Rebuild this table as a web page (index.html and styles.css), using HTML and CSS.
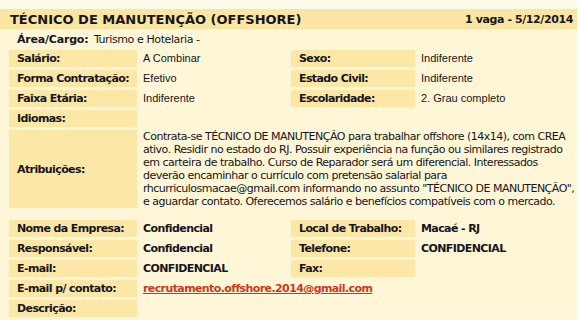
FILE: index.html
```html
<!DOCTYPE html>
<html lang="pt">
<head>
<meta charset="utf-8">
<link rel="stylesheet" href="styles.css">
</head>
<body>
<div class="job">
  <div class="head">
    <span class="title">TÉCNICO DE MANUTENÇÃO (OFFSHORE)</span>
    <span class="date">1 vaga - 5/12/2014</span>
  </div>
  <div class="area"><b>Área/Cargo:</b> <span class="area-val">Turismo e Hotelaria -</span></div>
  <div class="grid">
    <div class="lab">Salário:</div><div class="val">A Combinar</div>
    <div class="lab">Sexo:</div><div class="val">Indiferente</div>
    <div class="lab">Forma Contratação:</div><div class="val">Efetivo</div>
    <div class="lab">Estado Civil:</div><div class="val">Indiferente</div>
    <div class="lab">Faixa Etária:</div><div class="val">Indiferente</div>
    <div class="lab">Escolaridade:</div><div class="val">2. Grau completo</div>
    <div class="lab">Idiomas:</div><div class="val wide"></div>
    <div class="lab mid">Atribuições:</div>
    <div class="val wide desc">Contrata-se TÉCNICO DE MANUTENÇÃO para trabalhar offshore (14x14), com CREA<br>ativo. Residir no estado do RJ. Possuir experiência na função ou similares registrado<br>em carteira de trabalho. Curso de Reparador será um diferencial. Interessados<br>deverão encaminhar o currículo com pretensão salarial para<br>rhcurriculosmacae@gmail.com informando no assunto "TÉCNICO DE MANUTENÇÃO",<br>e aguardar contato. Oferecemos salário e benefícios compatíveis com o mercado.</div>
  </div>
  <div class="grid lower">
    <div class="lab">Nome da Empresa:</div><div class="val bold">Confidencial</div>
    <div class="lab">Local de Trabalho:</div><div class="val bold">Macaé - RJ</div>
    <div class="lab">Responsável:</div><div class="val bold">Confidencial</div>
    <div class="lab">Telefone:</div><div class="val bold">CONFIDENCIAL</div>
    <div class="lab">E-mail:</div><div class="val bold">CONFIDENCIAL</div>
    <div class="lab">Fax:</div><div class="val bold"></div>
    <div class="lab">E-mail p/ contato:</div><div class="val bold wide"><a href="#" class="mail">recrutamento.offshore.2014@gmail.com</a></div>
    <div class="lab">Descrição:</div><div class="val wide"></div>
  </div>
</div>
</body>
</html>
```
FILE: styles.css
```css
html, body {
  margin: 0;
  padding: 0;
  background: #ffffff;
}
.job {
  width: 577px;
  background: linear-gradient(#fffbea 0, #fffbea 9px, #fef6d6 9px);
  padding-top: 9px;
  padding-bottom: 3px;
  font-family: "DejaVu Sans", Verdana, sans-serif;
  font-size: 11px;
  color: #151520;
}
.head {
  height: 20px;
  background: #fbe5a2;
  display: flex;
  align-items: center;
  justify-content: space-between;
  padding: 0 4px 0 10px;
}
.title {
  font-weight: bold;
  font-size: 13px;
}
.date {
  font-weight: bold;
  font-size: 11px;
  letter-spacing: -0.4px;
}
.area {
  height: 20px;
  line-height: 22px;
  padding-left: 17px;
  margin-bottom: 1px;
}
.area b {
  letter-spacing: -0.2px;
}
.area-val {
  letter-spacing: -0.4px;
  margin-left: 2px;
}
.grid {
  display: grid;
  grid-template-columns: 128px 146px 124px 1fr;
  column-gap: 4px;
  row-gap: 3px;
  padding-left: 9px;
}
.lower {
  margin-top: 12px;
}
.lab {
  background: #fce7a6;
  font-weight: bold;
  height: 17px;
  line-height: 17px;
  padding-left: 8px;
  white-space: nowrap;
  letter-spacing: -0.6px;
}
.val {
  font-family: "Liberation Sans", Arial, sans-serif;
  font-size: 11px;
  line-height: 17px;
  padding-left: 2px;
  white-space: nowrap;
}
.val.bold {
  font-family: "DejaVu Sans", Verdana, sans-serif;
  font-weight: bold;
  letter-spacing: -0.6px;
}
.wide {
  grid-column: span 3;
}
.lab.mid {
  height: 78px;
  display: flex;
  align-items: center;
}
.desc {
  font-family: "DejaVu Sans", Verdana, sans-serif;
  line-height: 13px;
  white-space: nowrap;
  height: 78px;
  letter-spacing: -0.5px;
}
.mail {
  color: #c83a1a;
  text-decoration: underline;
}
```
